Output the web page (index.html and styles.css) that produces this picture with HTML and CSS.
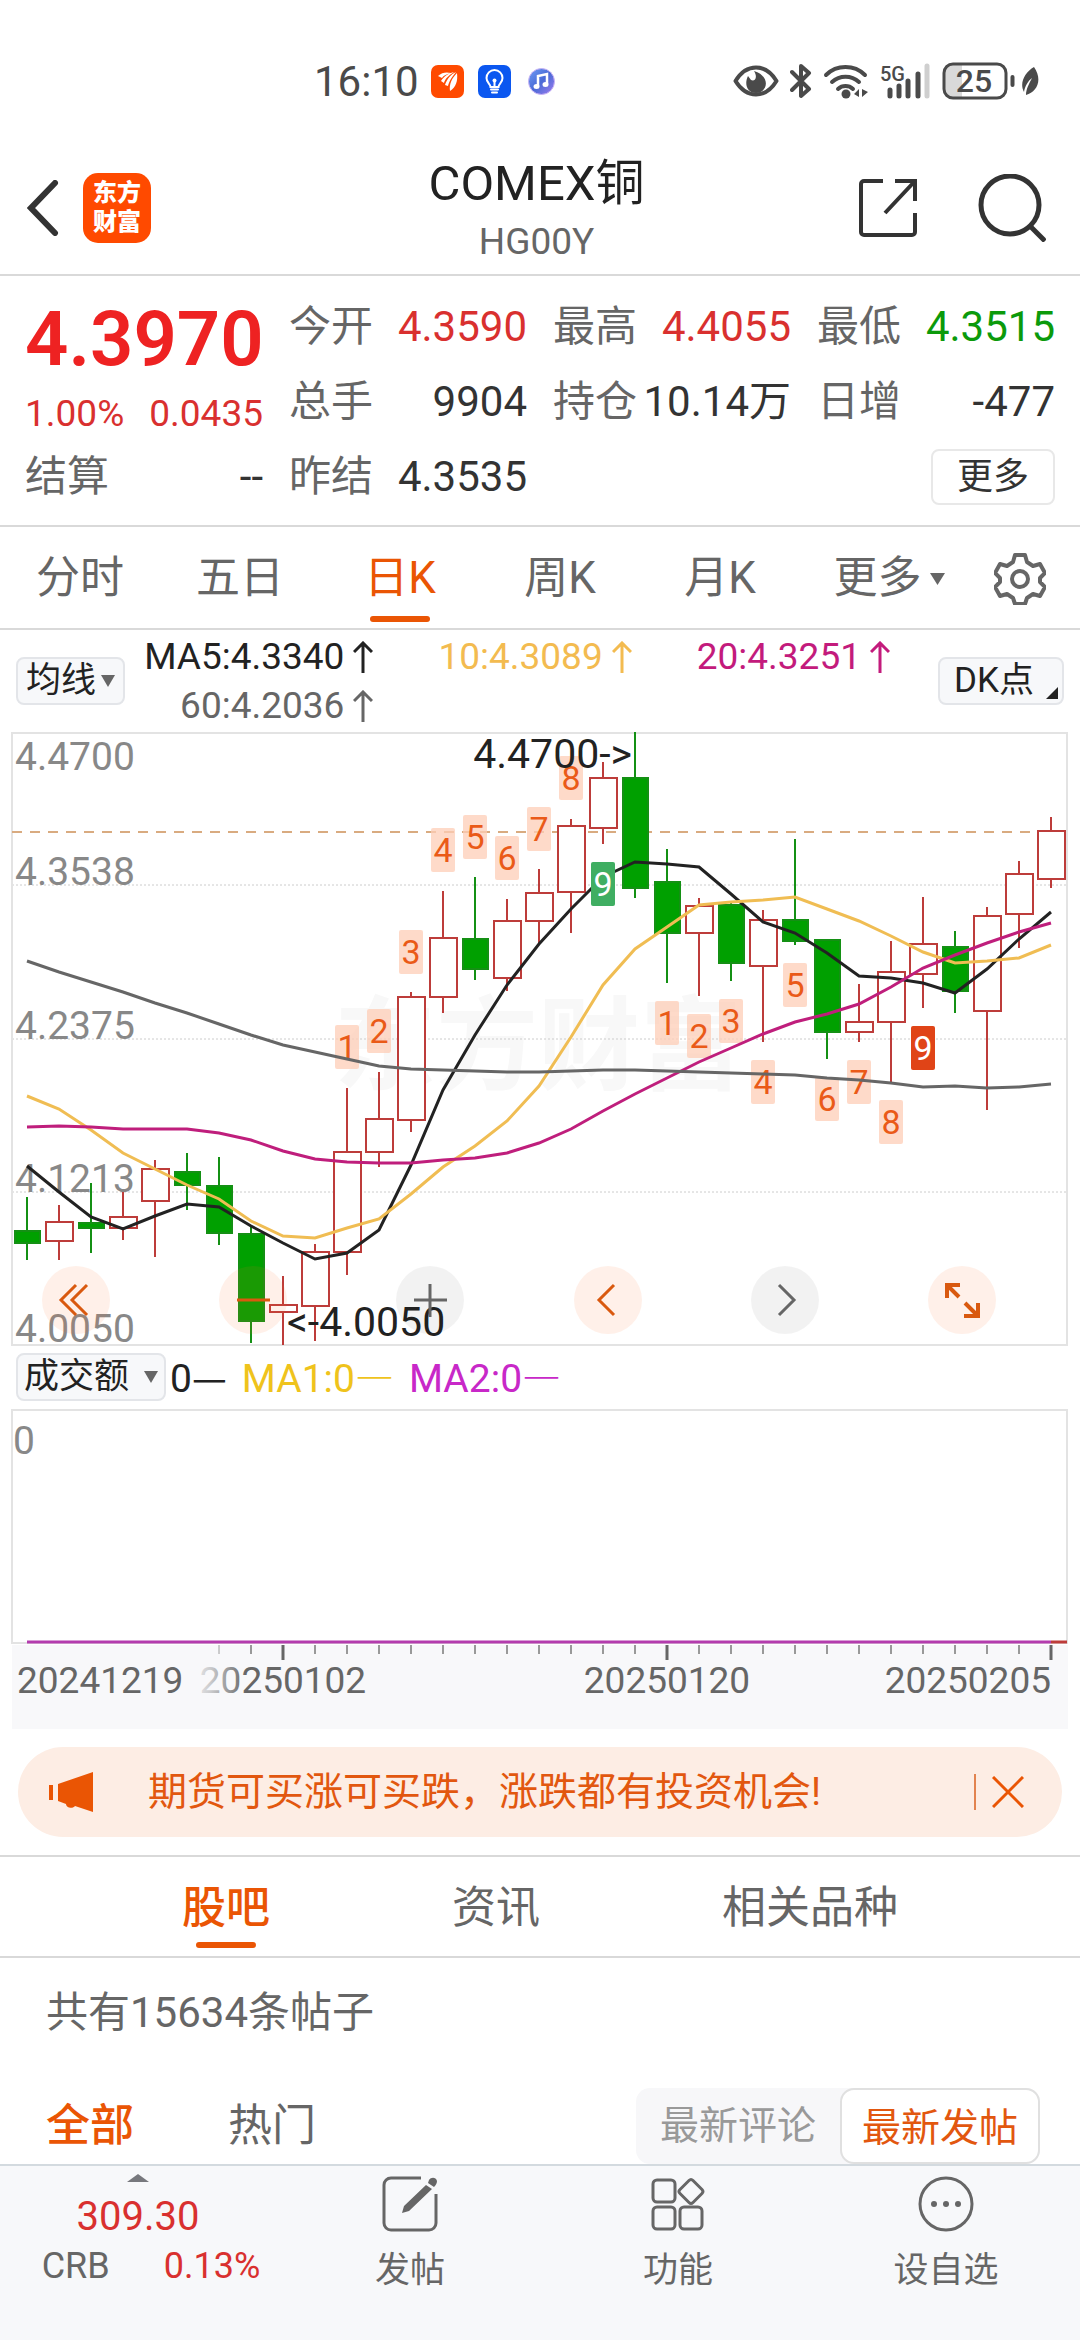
FILE: index.html
```html
<!DOCTYPE html>
<html lang="zh-CN">
<head>
  <meta charset="UTF-8" />
  <title>COMEX铜 HG00Y</title>
  <meta name="viewport" content="width=device-width, initial-scale=1.0" />
  <link rel="stylesheet" href="styles.css">
</head>
<body>

  <!-- Status bar -->
  <div class="status-bar">
    <div class="status-left">
      <span class="clock">16:10</span>
      <svg class="app-icon" width="33" height="33" viewBox="0 0 33 33">
        <rect width="33" height="33" rx="7" fill="#ff4a00"/>
        <path d="M7 11c4-4 9-4 13-3-5 1-8 3-9 5zM10 16c3-5 8-8 13-9-6 4-9 7-10 11zM14 20c2-6 6-11 11-13-5 6-7 10-8 14zM19 26c-1-7 2-13 7-18 1 8-1 14-7 18z" fill="#fff"/>
      </svg>
      <svg class="app-icon" width="33" height="33" viewBox="0 0 33 33">
        <rect width="33" height="33" rx="7" fill="#0b57f0"/>
        <path d="M12.500 22c0-3-4-4-4-9a8 8 0 0 1 16 0c0 5-4 6-4 9zM13 24.500h7M14 27.500h5M16.500 22v-7" fill="none" stroke="#fff" stroke-width="2" stroke-linecap="round"/>
        <circle cx="16.500" cy="15.500" r="2" fill="#fff"/>
      </svg>
      <svg class="app-icon music" width="27" height="27" viewBox="0 0 27 27">
        <defs>
          <linearGradient id="music" x1="0" y1="0" x2="1" y2="1">
            <stop offset="0" stop-color="#6f9df5"/>
            <stop offset="0.500" stop-color="#4a6bd6"/>
            <stop offset="1" stop-color="#a07df0"/>
          </linearGradient>
        </defs>
        <circle cx="13.500" cy="13.500" r="13" fill="url(#music)" stroke="#c9b2f5"/>
        <path d="M10 18V8l9-2v10" fill="none" stroke="#fff" stroke-width="2.500"/>
        <ellipse cx="8.500" cy="18.500" rx="3" ry="2.500" fill="#fff"/>
        <ellipse cx="17.500" cy="16.500" rx="3" ry="2.500" fill="#fff"/>
      </svg>
    </div>
    <div class="status-right">
      <svg width="46" height="32" viewBox="0 0 46 32">
        <path d="M2.500 16C8 7 15 2.500 23 2.500S38 7 43.500 16C38 25 31 29.500 23 29.500S8 25 2.500 16z" fill="none" stroke="#4a4a4a" stroke-width="4" stroke-linejoin="round"/>
        <path d="M21 6c4 6 1 11-3 9l-3-4c-4 8-1 17 8 17 12 0 15-17-2-22z" fill="#4a4a4a"/>
      </svg>
      <svg width="22" height="36" viewBox="0 0 22 36">
        <path d="M2 9l17 17-8 7V3l8 7L2 27" fill="none" stroke="#4a4a4a" stroke-width="4" stroke-linecap="round" stroke-linejoin="round"/>
      </svg>
      <svg width="46" height="36" viewBox="0 0 46 36">
        <path d="M3 12a28 28 0 0 1 39 0M9 19a20 20 0 0 1 27 0M15 26a11 11 0 0 1 15 0" fill="none" stroke="#4a4a4a" stroke-width="4" stroke-linecap="round"/>
        <circle cx="23" cy="31" r="4.500" fill="#4a4a4a"/>
        <path d="M36 26v8l-5-3zM39 26v8l6-5z" fill="#4a4a4a"/>
      </svg>
      <svg width="51" height="38" viewBox="0 0 51 38">
        <text x="0" y="19" class="net-text">5G</text>
        <path d="M10 34v-6M19 34V24M28 34V19M38 34V12" stroke="#4a4a4a" stroke-width="5" stroke-linecap="round"/>
        <path d="M47 34V4" stroke="#cfcfcf" stroke-width="5" stroke-linecap="round"/>
      </svg>
      <svg width="74" height="38" viewBox="0 0 74 38">
        <rect x="2" y="2" width="62" height="34" rx="9" fill="#fff"/>
        <path d="M11 2h9v34h-9a9 9 0 0 1-9-9V11a9 9 0 0 1 9-9z" fill="#d9d9d9"/>
        <rect x="2" y="2" width="62" height="34" rx="9" fill="none" stroke="#4a4a4a" stroke-width="3"/>
        <path d="M70.500 15v8" stroke="#4a4a4a" stroke-width="4" stroke-linecap="round"/>
        <text x="32" y="30" text-anchor="middle" class="battery-text">25</text>
      </svg>
      <svg class="leaf" width="18" height="29" viewBox="0 0 18 29">
        <path d="M12 0c-9 5-15 16-10 25 1-6 4-11 8-14-3 6-6 11-6 17C15 25 21 13 12 0z" fill="#4a4a4a"/>
      </svg>
    </div>
  </div>

  <header class="header">
    <div class="header-side">
      <a href="#" class="icon-link" aria-label="返回">
        <svg width="32" height="56" viewBox="0 0 32 56"><path d="M28 3L4 28l24 25" fill="none" stroke="#333" stroke-width="6" stroke-linecap="round"/></svg>
      </a>
      <a href="#" class="logo"><span>东方</span><span>财富</span></a>
    </div>
    <div class="title">
      <h1>COMEX铜</h1>
      <p>HG00Y</p>
    </div>
    <div class="header-side right">
      <button class="icon-link" aria-label="分享">
        <svg width="60" height="60" viewBox="0 0 60 60"><path d="M25 3H6a3 3 0 0 0-3 3v48a3 3 0 0 0 3 3h48a3 3 0 0 0 3-3V35M37 3h20v20M57 3L27 35" fill="none" stroke="#333" stroke-width="4"/></svg>
      </button>
      <button class="icon-link" aria-label="搜索">
        <svg width="68" height="68" viewBox="0 0 68 68"><circle cx="32" cy="31" r="29" fill="none" stroke="#333" stroke-width="5"/><path d="M52 52l15 15" stroke="#333" stroke-width="5"/></svg>
      </button>
    </div>
  </header>

  <!-- Quote -->
  <section class="quote">
    <div class="price">
      <strong>4.3970</strong>
      <div class="price-change"><span>1.00%</span><span>0.0435</span></div>
    </div>
    <div class="quote-item"><span>今开</span><b class="up">4.3590</b></div>
    <div class="quote-item"><span>最高</span><b class="up">4.4055</b></div>
    <div class="quote-item"><span>最低</span><b class="down">4.3515</b></div>
    <div class="quote-item"><span>总手</span><b>9904</b></div>
    <div class="quote-item"><span>持仓</span><b>10.14万</b></div>
    <div class="quote-item"><span>日增</span><b>-477</b></div>
    <div class="quote-item"><span>结算</span><b>--</b></div>
    <div class="quote-item"><span>昨结</span><b>4.3535</b></div>
    <button class="more-btn">更多</button>
  </section>

  <nav class="period-tabs">
    <a href="#">分时</a>
    <a href="#">五日</a>
    <a href="#" class="active">日K</a>
    <a href="#">周K</a>
    <a href="#">月K</a>
    <a href="#" class="more-tab">更多<svg width="15" height="12" viewBox="0 0 15 12"><path d="M0 0h15L7.500 12z" fill="currentColor"/></svg></a>
    <button class="settings" aria-label="设置">
      <svg width="52" height="52" viewBox="0 0 52 52">
        <path d="M21 2h10l2 7 6 4 7-2 5 9-5 5v4l5 5-5 9-7-2-6 4-2 6H21l-2-6-6-4-7 2-5-9 5-5v-4l-5-5 5-9 7 2 6-4z" fill="none" stroke="#666" stroke-width="4" stroke-linejoin="round"/>
        <circle cx="26" cy="26" r="8" fill="none" stroke="#666" stroke-width="4"/>
      </svg>
    </button>
  </nav>

  <!-- Moving averages -->
  <section class="ma-bar">
    <label class="picker">
      <select aria-label="主图指标"><option>均线</option></select>
      <svg width="14" height="12" viewBox="0 0 14 12"><path d="M0 0h14L7 12z" fill="#666"/></svg>
    </label>
    <div class="ma-values">
      <span class="ma5">MA5:4.3340<svg width="20" height="32" viewBox="0 0 20 32"><path d="M10 32V2M1 11l9-9 9 9" fill="none" stroke="currentColor" stroke-width="3"/></svg></span>
      <span class="ma10">10:4.3089<svg width="20" height="32" viewBox="0 0 20 32"><path d="M10 32V2M1 11l9-9 9 9" fill="none" stroke="currentColor" stroke-width="3"/></svg></span>
      <span class="ma20">20:4.3251<svg width="20" height="32" viewBox="0 0 20 32"><path d="M10 32V2M1 11l9-9 9 9" fill="none" stroke="currentColor" stroke-width="3"/></svg></span>
      <span class="ma60">60:4.2036<svg width="20" height="32" viewBox="0 0 20 32"><path d="M10 32V2M1 11l9-9 9 9" fill="none" stroke="currentColor" stroke-width="3"/></svg></span>
    </div>
    <button class="dk-btn">DK点<svg width="12" height="12" viewBox="0 0 12 12"><path d="M12 0v12H0z" fill="#222"/></svg></button>
  </section>

  <section class="k-chart">
    <svg id="kChart" viewBox="0 0 1080 616"></svg>
    <div class="chart-tools">
      <button class="tool" aria-label="最左"><svg viewBox="0 0 68 68"><path d="M34 19L19 34l15 15M45 19L30 34l15 15"/></svg></button>
      <button class="tool" aria-label="缩小"><svg viewBox="0 0 68 68"><path d="M18 34h33"/></svg></button>
      <button class="tool gray" aria-label="放大"><svg viewBox="0 0 68 68"><path d="M18 34h33M34 18v33"/></svg></button>
      <button class="tool" aria-label="左移"><svg viewBox="0 0 68 68"><path d="M40 19L25 34l15 15"/></svg></button>
      <button class="tool gray" aria-label="右移"><svg viewBox="0 0 68 68"><path d="M28 19l15 15-15 15"/></svg></button>
      <button class="tool full" aria-label="全屏"><svg viewBox="0 0 68 68"><path d="M32 19H19v13M19 19l12 12M36 50h14V37M50 50L37 37"/></svg></button>
    </div>
  </section>

  <section class="volume-bar">
    <label class="picker wide">
      <select aria-label="副图指标"><option>成交额</option></select>
      <svg width="14" height="12" viewBox="0 0 14 12"><path d="M0 0h14L7 12z" fill="#666"/></svg>
    </label>
    <div class="volume-values">
      <span>0<i>—</i></span>
      <span class="vol-ma1">MA1:0<i>—</i></span>
      <span class="vol-ma2">MA2:0<i>—</i></span>
    </div>
  </section>
  <svg id="volChart" class="chart" viewBox="0 0 1080 236"></svg>
  <svg id="axis" class="chart" viewBox="0 0 1080 84"></svg>

  <aside class="notice">
    <svg width="46" height="40" viewBox="0 0 46 40">
      <path d="M1 13h4v15H1zM10 12L45 0v40l-18-6c-2 3-9 2-9-2l-8-3z" fill="#ea5504"/>
    </svg>
    <p>期货可买涨可买跌，涨跌都有投资机会!</p>
    <button class="notice-close" aria-label="关闭">
      <svg width="32" height="32" viewBox="0 0 32 32"><path d="M1 1l30 30M31 1L1 31" stroke="#ea5504" stroke-width="3"/></svg>
    </button>
  </aside>

  <nav class="content-tabs">
    <a href="#" class="active">股吧</a>
    <a href="#">资讯</a>
    <a href="#">相关品种</a>
  </nav>

  <main class="posts">
    <p class="post-count">共有15634条帖子</p>
    <div class="post-filter">
      <a href="#" class="active">全部</a>
      <a href="#">热门</a>
      <div class="sort">
        <button>最新评论</button>
        <button class="active">最新发帖</button>
      </div>
    </div>
  </main>

  <footer class="bottom-bar">
    <a href="#" class="index">
      <svg width="22" height="8" viewBox="0 0 22 8"><path d="M11 0l11 8H0z" fill="#77787d"/></svg>
      <span class="index-value">309.30</span>
      <span class="index-row"><span>CRB</span><span class="up">0.13%</span></span>
    </a>
    <a href="#" class="action">
      <svg width="56" height="56" viewBox="0 0 56 56">
        <path d="M39 2H9a7 7 0 0 0-7 7v38a7 7 0 0 0 7 7h38a7 7 0 0 0 7-7V18" fill="none" stroke="#666" stroke-width="3"/>
        <path d="M47 4c2-3 7-3 8 1 0 2-1 4-3 6l-6-4zM44 9l6 4-23 22-7 2 2-7z" fill="#666"/>
      </svg>
      <span>发帖</span>
    </a>
    <a href="#" class="action">
      <svg width="56" height="56" viewBox="0 0 56 56">
        <g fill="none" stroke="#666" stroke-width="3">
          <rect x="3" y="4" width="22" height="22" rx="4"/>
          <rect x="3" y="31" width="22" height="22" rx="4"/>
          <rect x="30" y="31" width="22" height="22" rx="4"/>
          <path d="M39 4.500q2-2 4 0l9 9q2 2 0 4l-9 9q-2 2-4 0l-9-9q-2-2 0-4z"/>
        </g>
      </svg>
      <span>功能</span>
    </a>
    <a href="#" class="action">
      <svg width="56" height="56" viewBox="0 0 56 56">
        <circle cx="28" cy="28" r="26" fill="none" stroke="#666" stroke-width="3"/>
        <circle cx="16" cy="28" r="3" fill="#666"/><circle cx="28" cy="28" r="3" fill="#666"/><circle cx="40" cy="28" r="3" fill="#666"/>
      </svg>
      <span>设自选</span>
    </a>
  </footer>

  <script src="chart.js"></script>
</body>
</html>
```

FILE: styles.css
```css
* {
  box-sizing: border-box;
}

body {
  margin: 0;
  min-height: 100vh;
  display: flex;
  flex-direction: column;
  background: #fff;
  color: #333;
  font-family: Roboto, "Noto Sans CJK SC", sans-serif;
}

a {
  color: inherit;
  text-decoration: none;
}

button, select {
  font: inherit;
  color: inherit;
  border: none;
  background: none;
  padding: 0;
  cursor: pointer;
}

h1, p {
  margin: 0;
  font-weight: normal;
}

svg {
  display: block;
  flex: none;
}

.up {
  color: #d9302f;
}

.down {
  color: #0b9a0b;
}

/* status bar */
.status-bar {
  display: flex;
  justify-content: space-between;
  align-items: center;
  height: 162px;
  padding: 0 40px 0 314px;
  color: #4a4a4a;
}

.status-left, .status-right {
  display: flex;
  align-items: center;
}

.clock {
  font-size: 42px;
  margin-right: 12px;
}

.app-icon {
  margin-right: 14px;
}

.music {
  margin-left: 3px;
}

.status-right {
  gap: 11px;
}

.leaf {
  margin-left: -5px;
}

.net-text {
  font-size: 20px;
  font-weight: 500;
  fill: #4a4a4a;
}

.battery-text {
  font-size: 32px;
  font-weight: 500;
  fill: #4a4a4a;
}

/* header */
.header {
  display: flex;
  justify-content: space-between;
  align-items: center;
  height: 114px;
  padding: 0 34px 20px 27px;
  border-bottom: 2px solid #d9d9d9;
}

.header-side {
  display: flex;
  align-items: center;
  flex: 1;
  gap: 24px;
}

.header-side.right {
  justify-content: flex-end;
  gap: 60px;
}

.logo {
  display: flex;
  flex-direction: column;
  justify-content: center;
  align-items: center;
  width: 68px;
  height: 70px;
  border-radius: 15px;
  background: #ff4a00;
  color: #fff;
  font-size: 24px;
  line-height: 29px;
  font-weight: 900;
}

.title {
  padding-top: 8px;
  text-align: center;
}

.title h1 {
  font-size: 49px;
  line-height: 60px;
  color: #222;
}

.title p {
  font-size: 37px;
  line-height: 56px;
  color: #666;
}

/* quote */
.quote {
  display: grid;
  grid-template-columns: repeat(4, minmax(0, 1fr));
  grid-auto-rows: 75px;
  column-gap: 26px;
  padding: 13px 25px 11px;
  border-bottom: 2px solid #d9d9d9;
}

.price {
  grid-row: span 2;
  color: #ee2222;
}

.price strong {
  display: block;
  font-size: 76px;
  line-height: 100px;
  font-weight: 600;
}

.price-change {
  display: flex;
  justify-content: space-between;
  font-size: 37px;
  line-height: 50px;
  color: #d9302f;
}

.quote-item {
  display: flex;
  justify-content: space-between;
  align-items: center;
  white-space: nowrap;
  font-size: 42px;
  line-height: 75px;
}

.quote-item span {
  color: #666;
}

.quote-item b {
  font-weight: normal;
}

.more-btn {
  grid-column: 4;
  justify-self: end;
  align-self: center;
  width: 124px;
  height: 56px;
  border: 2px solid #e8e8e8;
  border-radius: 8px;
  font-size: 36px;
  line-height: 48px;
}

/* period tabs */
.period-tabs {
  display: grid;
  grid-template-columns: repeat(6, minmax(0, 4fr)) minmax(0, 3fr);
  height: 103px;
  border-bottom: 2px solid #d9d9d9;
  color: #666;
  font-size: 44px;
  line-height: 103px;
}

.period-tabs a {
  display: flex;
  justify-content: center;
  align-items: center;
  gap: 8px;
  white-space: nowrap;
}

.period-tabs .more-tab {
  padding-left: 18px;
}

.settings {
  display: flex;
  justify-content: center;
  align-items: center;
}

.active {
  color: #ea5504;
}

.period-tabs .active, .content-tabs .active {
  position: relative;
}

.period-tabs .active::after, .content-tabs .active::after {
  content: "";
  position: absolute;
  bottom: 8px;
  left: 50%;
  width: 60px;
  height: 6px;
  margin-left: -30px;
  border-radius: 3px;
  background: #ea5504;
}

/* moving averages */
.ma-bar {
  display: flex;
  align-items: center;
  height: 102px;
  padding: 0 16px;
}

.picker, .dk-btn {
  display: flex;
  align-items: center;
  height: 48px;
  border: 2px solid #e3e5e9;
  border-radius: 8px;
  background: #f7f8fa;
  color: #222;
  font-size: 35px;
  line-height: 44px;
}

.picker {
  gap: 4px;
  padding: 0 8px;
}

.picker select {
  appearance: none;
}

.picker.wide {
  gap: 14px;
  padding: 0 6px;
}

.dk-btn {
  margin-left: auto;
  padding: 0 4px 0 14px;
  gap: 12px;
}

.dk-btn svg {
  align-self: flex-end;
  margin-bottom: 4px;
}

.ma-values {
  display: grid;
  grid-template-columns: 25fr 26fr 26fr;
  width: 765px;
  font-size: 37px;
  line-height: 49px;
}

.ma-values span {
  display: flex;
  justify-content: flex-end;
  align-items: center;
  gap: 9px;
}

.ma5 {
  color: #222;
}

.ma10 {
  color: #f3bb50;
}

.ma20 {
  color: #c31b7c;
}

.ma60 {
  color: #666;
}

/* charts */
.k-chart {
  position: relative;
}

.k-chart > svg, .chart {
  width: 100%;
  height: auto;
}

.chart-tools {
  position: absolute;
  left: 42px;
  right: 84px;
  bottom: 14px;
  display: flex;
  justify-content: space-between;
}

.tool {
  width: 68px;
  height: 68px;
  border-radius: 50%;
  background: rgba(255, 110, 40, 0.1);
}

.tool.gray {
  background: rgba(0, 0, 0, 0.05);
}

.tool path {
  fill: none;
  stroke: #d9590f;
  stroke-width: 3;
}

.tool.gray path {
  stroke: #666;
}

.tool.full path {
  stroke-width: 4;
}

.frame {
  fill: none;
  stroke: #e3e3e3;
  stroke-width: 2;
}

.grid-line {
  stroke: #ccc;
  stroke-width: 1;
  stroke-dasharray: 2 2;
}

.price-line {
  stroke: #d9ab80;
  stroke-width: 2;
  stroke-dasharray: 10 8;
}

.watermark {
  font-size: 102px;
  font-weight: 700;
  fill: #f8f8f8;
}

.scale {
  font-size: 39px;
  fill: #888;
}

.extreme {
  font-size: 41px;
  fill: #222;
}

.rise {
  fill: #fff;
  stroke: #bd3c3a;
  stroke-width: 2;
}

.fall {
  fill: #00a000;
  stroke: #149014;
  stroke-width: 2;
}

.ma-line {
  fill: none;
  stroke-width: 3;
}

.mark {
  font-size: 34px;
  text-anchor: middle;
}

.date {
  font-size: 37px;
  fill: #666;
}

.volume-bar {
  display: flex;
  align-items: center;
  height: 61px;
  padding: 0 16px 4px;
}

.volume-values {
  display: flex;
  gap: 15px;
  margin-left: 4px;
  color: #222;
  font-size: 39px;
  line-height: 48px;
}

/* the CJK dash is a full em wide */
.volume-values i {
  font-family: "Noto Sans CJK SC", sans-serif;
  font-style: normal;
}

.vol-ma1 {
  color: #efc31c;
}

.vol-ma2 {
  color: #c828c8;
}

/* notice */
.notice {
  display: flex;
  align-items: center;
  height: 90px;
  margin: 18px;
  padding: 0 38px 0 30px;
  border-radius: 45px;
  background: #fdede4;
  color: #e2570f;
}

.notice p {
  flex: 1;
  margin-left: 54px;
  font-size: 39px;
  line-height: 60px;
}

.notice-close {
  padding: 2px 0 2px 16px;
  border-left: 2px solid #e2834f;
}

/* content tabs */
.content-tabs {
  display: flex;
  justify-content: space-evenly;
  height: 103px;
  border-top: 2px solid #d9d9d9;
  border-bottom: 2px solid #d9d9d9;
  color: #666;
  font-size: 44px;
  line-height: 102px;
}

.content-tabs .active {
  font-weight: 500;
}

/* posts */
.posts {
  flex: 1;
  padding: 0 40px 0 46px;
  color: #666;
}

.post-count {
  font-size: 42px;
  line-height: 110px;
}

.post-filter {
  display: flex;
  align-items: center;
  gap: 94px;
  margin-top: 20px;
  font-size: 44px;
  line-height: 76px;
}

.post-filter > .active {
  font-weight: 500;
}

.sort {
  display: flex;
  margin-left: auto;
  border-radius: 14px;
  background: #f7f7f9;
  color: #999;
  font-size: 39px;
}

.sort button {
  height: 76px;
  padding: 0 24px;
}

.sort .active {
  padding: 0 20px;
  border: 2px solid #e0e0e0;
  border-radius: 14px;
  background: #fff;
  color: #e2570f;
}

/* bottom bar */
.bottom-bar {
  display: flex;
  height: 176px;
  border-top: 2px solid #d3dadf;
  background: #f7f8fa;
  color: #666;
}

.bottom-bar a {
  display: flex;
  flex-direction: column;
  align-items: center;
}

.bottom-bar .index {
  flex: 69 69 0;
  padding-top: 8px;
  font-size: 36px;
  line-height: 48px;
}

.index-value {
  margin-top: 10px;
  color: #d9302f;
  font-size: 40px;
  line-height: 50px;
}

.index-row {
  display: flex;
  gap: 54px;
  padding-left: 26px;
}

.bottom-bar .action {
  flex: 67 67 0;
  padding-top: 10px;
  font-size: 35px;
  line-height: 78px;
}
```

FILE: chart.js
```javascript
const NS = 'http://www.w3.org/2000/svg';
const TOP = 732;      // top edge of the price pane
const STEP = 32;      // distance between candles
const FIRST = 27;

// [up, high, body top, body bottom, low]
const candles = [
  [0, 1197, 1231, 1243, 1260], [1, 1205, 1222, 1241, 1260], [0, 1183, 1223, 1228, 1253],
  [1, 1192, 1217, 1228, 1240], [1, 1160, 1169, 1201, 1257], [0, 1153, 1172, 1185, 1210],
  [0, 1157, 1186, 1233, 1245], [0, 1225, 1234, 1321, 1343], [1, 1276, 1305, 1312, 1345],
  [1, 1244, 1252, 1306, 1341], [1, 1088, 1152, 1252, 1275], [1, 1072, 1119, 1152, 1167],
  [1, 992, 997, 1120, 1132], [1, 891, 938, 997, 1013], [0, 877, 939, 969, 980],
  [1, 899, 921, 978, 991], [1, 869, 893, 921, 943], [1, 819, 826, 892, 933],
  [1, 762, 778, 828, 844], [0, 732, 778, 888, 898], [0, 849, 882, 933, 983],
  [1, 898, 906, 933, 996], [0, 903, 905, 963, 981], [1, 910, 920, 966, 1042],
  [0, 839, 920, 941, 945], [0, 939, 940, 1032, 1059], [1, 984, 1022, 1032, 1042],
  [1, 941, 972, 1022, 1082], [1, 897, 944, 974, 1008], [0, 931, 947, 991, 1013],
  [1, 907, 916, 1011, 1110], [1, 861, 874, 914, 948], [1, 817, 831, 879, 888]
];

const averages = [
  ['#222', [1166, 1192, 1217, 1229, 1216, 1204, 1207, 1226, 1243, 1259, 1253, 1230, 1165, 1090, 1035, 985, 944, 909, 877, 862, 864, 867, 894, 922, 933, 953, 976, 978, 983, 993, 969, 939, 912]],
  ['#f0bd53', [1096, 1109, 1130, 1153, 1169, 1185, 1199, 1221, 1236, 1238, 1228, 1219, 1194, 1167, 1146, 1121, 1086, 1037, 985, 949, 927, 905, 902, 900, 897, 909, 921, 936, 952, 963, 961, 958, 945]],
  ['#bf1e7c', [1127, 1126, 1127, 1129, 1129, 1129, 1133, 1140, 1151, 1159, 1162, 1163, 1163, 1160, 1158, 1153, 1143, 1129, 1111, 1094, 1078, 1062, 1048, 1034, 1022, 1014, 1004, 987, 968, 955, 943, 932, 923]],
  ['#666', [961, 972, 982, 992, 1003, 1013, 1024, 1035, 1045, 1052, 1059, 1066, 1069, 1070, 1071, 1072, 1072, 1071, 1070, 1070, 1071, 1072, 1073, 1074, 1075, 1078, 1080, 1083, 1087, 1086, 1088, 1087, 1084]]
];

// [candle index, top, count]
const marks = [
  [10, 1025, 1], [11, 1009, 2], [12, 930, 3], [13, 828, 4], [14, 815, 5], [15, 836, 6], [16, 807, 7], [17, 756, 8],
  [20, 1001, 1], [21, 1014, 2], [22, 999, 3], [23, 1060, 4], [24, 963, 5], [25, 1077, 6], [26, 1060, 7], [27, 1100, 8]
];
const nines = [[18, 862, '#3fae62'], [28, 1026, '#e04417']];

function add(svg, tag, attrs, text) {
  const el = document.createElementNS(NS, tag);
  for (const key in attrs) el.setAttribute(key, attrs[key]);
  if (text !== undefined) el.textContent = text;
  svg.appendChild(el);
  return el;
}

const xOf = i => FIRST + i * STEP;

function drawMark(svg, i, top, n, bg, color) {
  const x = xOf(i), y = top - TOP;
  add(svg, 'rect', { x: x - 12, y: y, width: 24, height: 44, rx: 2, fill: bg });
  add(svg, 'text', { x: x, y: y + 34, class: 'mark', fill: color }, n);
}

function drawK() {
  const svg = document.getElementById('kChart');

  add(svg, 'text', { x: 334, y: 350, class: 'watermark' }, '东方财富');
  [153, 307, 460].forEach(y => add(svg, 'path', { d: `M12 ${y}H1067`, class: 'grid-line' }));
  add(svg, 'rect', { x: 12, y: 1, width: 1055, height: 612, class: 'frame' });
  add(svg, 'path', { d: 'M12 100H1040', class: 'price-line' });

  candles.forEach(([up, high, top, bottom, low], i) => {
    const x = xOf(i);
    const cls = up ? 'rise' : 'fall';
    add(svg, 'path', { d: `M${x} ${high - TOP}V${top - TOP}M${x} ${bottom - TOP}V${low - TOP}`, class: cls });
    add(svg, 'rect', { x: up ? x - 13 : x - 12, y: top - TOP, width: up ? 27 : 25, height: bottom - top, class: cls });
  });

  [['4.4700', 38], ['4.3538', 153], ['4.2375', 307], ['4.1213', 460], ['4.0050', 610]]
    .forEach(([label, y]) => add(svg, 'text', { x: 15, y: y, class: 'scale' }, label));

  marks.forEach(([i, top, n]) => drawMark(svg, i, top, n, 'rgba(253, 205, 183, 0.75)', '#ea5a18'));
  averages.forEach(([color, ys]) => {
    const points = ys.map((y, i) => `${xOf(i)},${y - TOP}`).join(' ');
    add(svg, 'polyline', { points: points, class: 'ma-line', stroke: color });
  });
  nines.forEach(([i, top, bg]) => drawMark(svg, i, top, 9, bg, '#fff'));

  add(svg, 'text', { x: 632, y: 36, class: 'extreme', 'text-anchor': 'end' }, '4.4700->');
  add(svg, 'text', { x: 287, y: 604, class: 'extreme' }, '<-4.0050');
}

function drawVolume() {
  const svg = document.getElementById('volChart');
  add(svg, 'rect', { x: 12, y: 1, width: 1055, height: 233, class: 'frame' });
  add(svg, 'text', { x: 13, y: 45, class: 'scale' }, '0');
  add(svg, 'path', { d: 'M27 233H1051', stroke: '#b43cae', 'stroke-width': 3 });
  add(svg, 'path', { d: 'M1051 233H1067', stroke: '#bd3c3a', 'stroke-width': 3 });
}

function drawAxis() {
  const svg = document.getElementById('axis');
  add(svg, 'rect', { x: 12, y: 0, width: 1056, height: 84, fill: '#f8f8fa' });
  for (let i = 6; i < candles.length; i++) {
    const major = [8, 20, 32].includes(i);
    add(svg, 'path', { d: `M${xOf(i)} 0V${major ? 15 : 9}`, stroke: major ? '#666' : '#999', 'stroke-width': major ? 3 : 2 });
  }
  add(svg, 'text', { x: 283, y: 48, class: 'date', 'text-anchor': 'middle' }, '20250102');

  // the first label fades out its neighbour
  const fade = add(svg, 'linearGradient', { id: 'fade' });
  add(fade, 'stop', { offset: 0, 'stop-color': '#f8f8fa' });
  add(fade, 'stop', { offset: 0.4, 'stop-color': '#f8f8fa', 'stop-opacity': 0.7 });
  add(fade, 'stop', { offset: 1, 'stop-color': '#f8f8fa', 'stop-opacity': 0 });
  add(svg, 'rect', { x: 186, y: 0, width: 60, height: 84, fill: 'url(#fade)' });

  add(svg, 'text', { x: 17, y: 48, class: 'date' }, '20241219');
  add(svg, 'text', { x: 667, y: 48, class: 'date', 'text-anchor': 'middle' }, '20250120');
  add(svg, 'text', { x: 1051, y: 48, class: 'date', 'text-anchor': 'end' }, '20250205');
}

drawK();
drawVolume();
drawAxis();
```
